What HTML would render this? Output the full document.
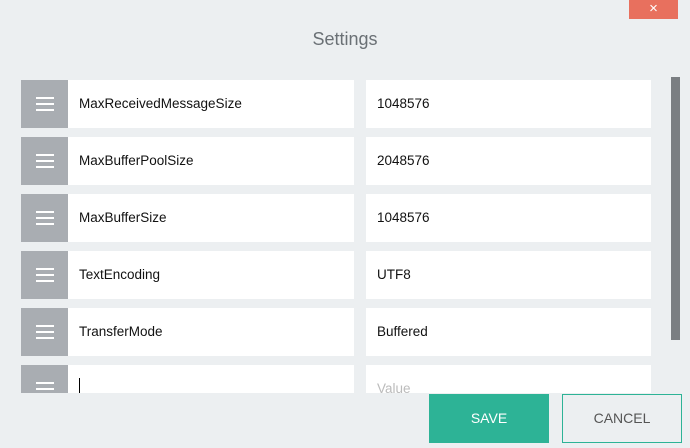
<html><head><style>
body{margin:0;width:690px;height:448px;background:#eceff1;font-family:"Liberation Sans",sans-serif;position:relative;overflow:hidden}
.a{position:absolute}
.h{background:#a9adb2;width:47px;height:48px;left:21px}
.h i{position:absolute;left:15px;width:18px;height:2px;background:#fff}
.n{background:#fff;left:68px;width:286px;height:48px;font-size:13.5px;line-height:48px;color:#111;box-sizing:border-box;padding-left:11px}
.v{background:#fff;left:366px;width:285px;height:48px;font-size:13.5px;line-height:48px;color:#111;box-sizing:border-box;padding-left:11px}
</style></head><body>
<div class="a" style="left:629px;top:0;width:49px;height:19px;background:#e8705e;color:#fff;text-align:center;font-size:15px;line-height:18px">×</div>
<div class="a" style="left:0;width:690px;top:29px;text-align:center;font-size:18px;color:#6a7075">Settings</div>
<div class="a" style="left:671px;top:77px;width:9px;height:263px;background:#7a7e82"></div>
<div id="rows"></div>
<div class="a" style="left:0;top:393px;width:690px;height:55px;background:#eceff1"></div>
<div class="a" style="left:429px;top:394px;width:120px;height:49px;background:#2db396;color:#fff;font-size:14px;line-height:49px;text-align:center">SAVE</div>
<div class="a" style="left:562px;top:394px;width:118px;height:47px;border:1px solid #2db396;color:#555;font-size:14px;line-height:47px;text-align:center">CANCEL</div>
<script>
var d=[["MaxReceivedMessageSize","1048576"],["MaxBufferPoolSize","2048576"],["MaxBufferSize","1048576"],["TextEncoding","UTF8"],["TransferMode","Buffered"],["",""]];
var s="";d.forEach(function(r,i){var t=80+i*57;
s+='<div class="a h" style="top:'+t+'px"><i style="top:17px"></i><i style="top:23px"></i><i style="top:29px"></i></div>';
s+='<div class="a n" style="top:'+t+'px">'+(i==5?'<span style="position:absolute;left:11px;top:13px;width:1px;height:15px;background:#000"></span>':r[0])+'</div>';
s+='<div class="a v" style="top:'+t+'px;'+(i==5?'color:#bbb':'')+'">'+(i==5?'Value':r[1])+'</div>';});
document.getElementById("rows").innerHTML=s;
</script>
</body></html>
